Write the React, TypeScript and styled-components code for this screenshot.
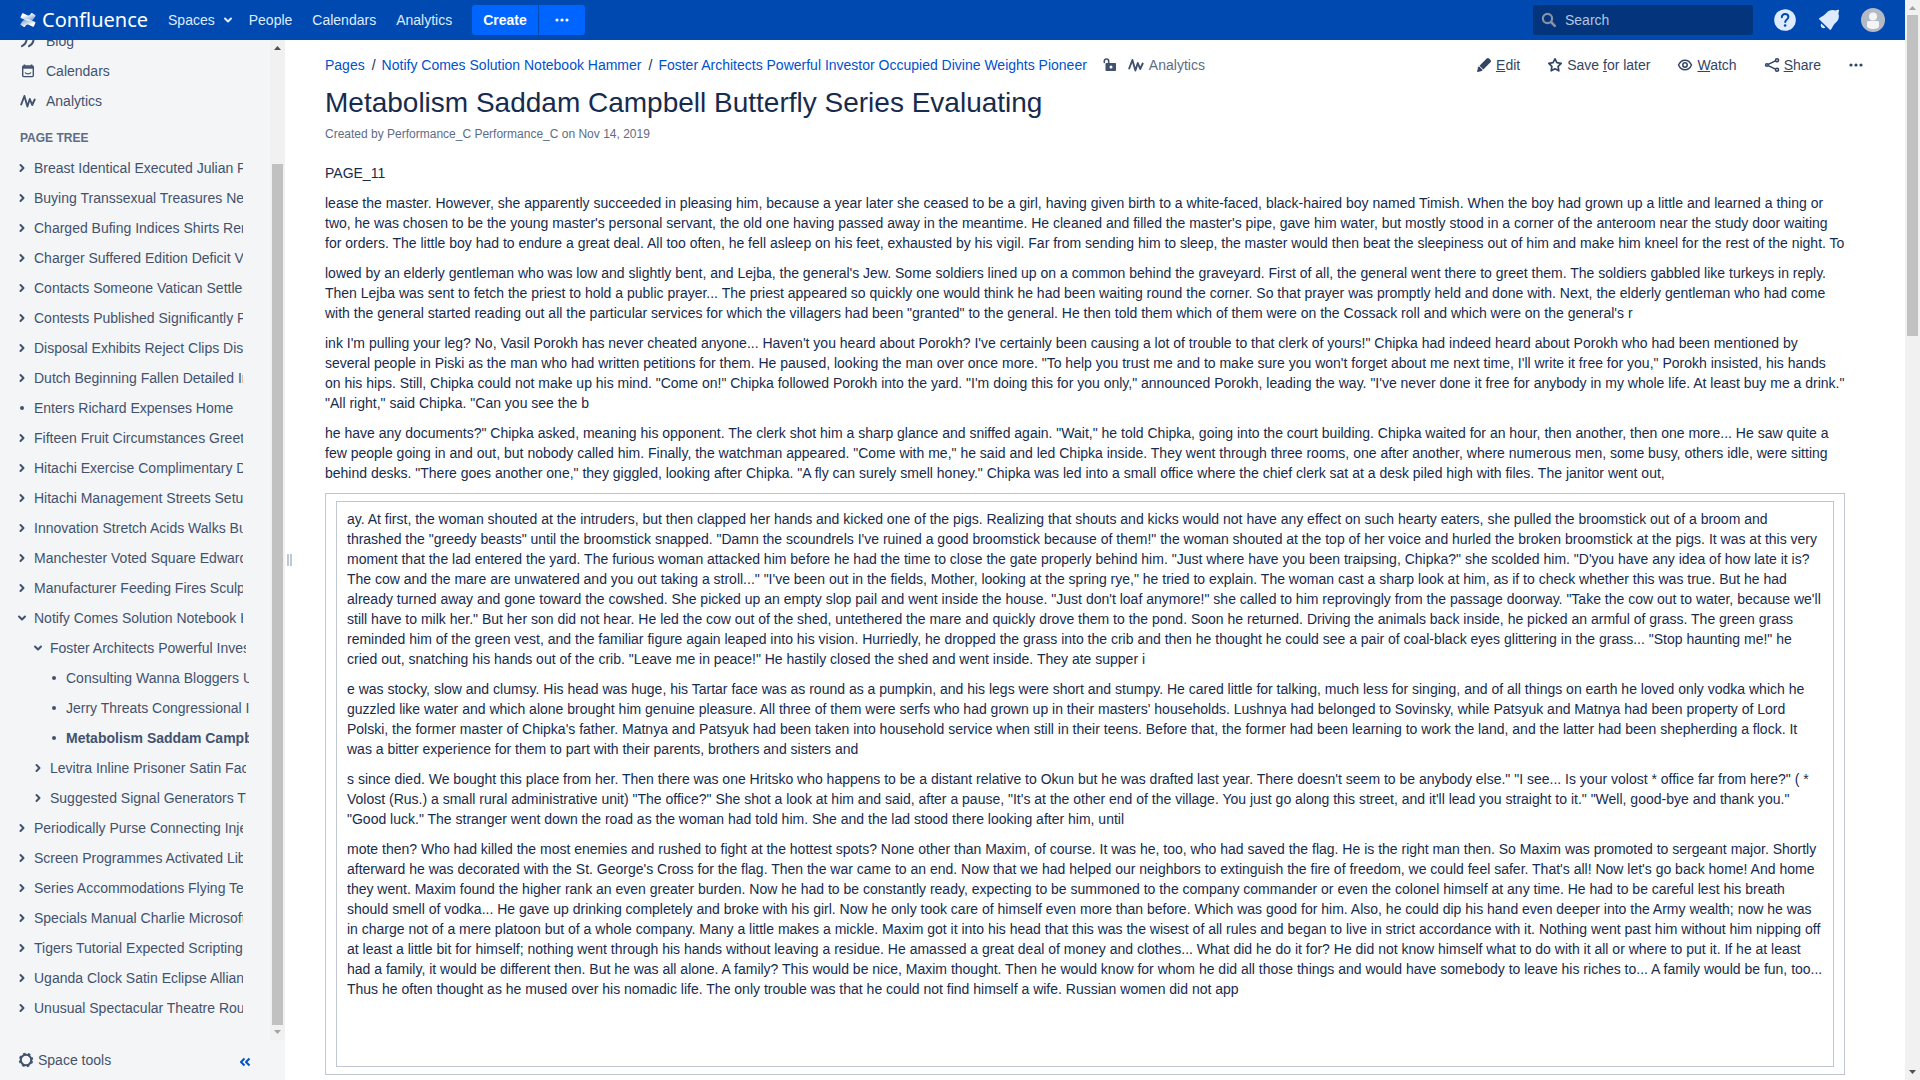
import React from 'react';
import styled, { createGlobalStyle } from 'styled-components';

const GlobalStyle = createGlobalStyle`
  *, *::before, *::after { box-sizing: border-box; }
  body {
    margin: 0;
    background: #fff;
    color: #172b4d;
    font: 14px/20px "Liberation Sans", Arial, sans-serif;
  }
  button, input { font: inherit; }
  a { text-decoration: none; }
  svg { display: block; flex: none; }
`;

/* ---------- icons ---------- */

const ConfluenceMark = () => (
  <svg width="16" height="16" viewBox="0 0 32 32" aria-hidden="true">
    <defs>
      <linearGradient id="markLow" x1="1" y1="1" x2="0.2" y2="0">
        <stop offset="0.3" stopColor="#fff" />
        <stop offset="1" stopColor="#fff" stopOpacity="0.45" />
      </linearGradient>
      <linearGradient id="markHigh" x1="0" y1="0" x2="0.8" y2="1">
        <stop offset="0.3" stopColor="#fff" />
        <stop offset="1" stopColor="#fff" stopOpacity="0.45" />
      </linearGradient>
    </defs>
    <path fill="url(#markLow)" d="M1 24c-.5.8-.4 1.500.5 2l6.300 3.900c.8.500 1.600.3 2.100-.5 3-5 5-5.300 9.600-3.100l6.400 3c.8.400 1.600.1 2-.7l3-6.900c.4-.8 0-1.500-.7-1.900L23 16.500C13.500 12 7 12.600 1 24z" />
    <path fill="url(#markHigh)" d="M31 8c.5-.8.400-1.500-.5-2l-6.300-3.900c-.8-.5-1.600-.3-2.100.5-3 5-5 5.300-9.600 3.100l-6.400-3c-.8-.4-1.600-.1-2 .7l-3 6.900c-.4.8 0 1.500.7 1.900L9 15.500C18.500 20 25 19.400 31 8z" />
  </svg>
);

const Chevron = ({ down = false }: { down?: boolean }) => (
  <svg width="10" height="10" viewBox="0 0 10 10" fill="none" stroke="currentColor" strokeWidth="2" strokeLinecap="round" strokeLinejoin="round" aria-hidden="true">
    <path d={down ? 'M2 3.500 5 6.500 8 3.500' : 'M3.500 2 6.500 5 3.500 8'} />
  </svg>
);

const Bullet = () => (
  <svg width="10" height="10" viewBox="0 0 10 10" aria-hidden="true">
    <circle cx="5" cy="5" r="2" fill="currentColor" />
  </svg>
);

const Dots = () => (
  <svg width="16" height="16" viewBox="0 0 16 16" fill="currentColor" aria-hidden="true">
    <circle cx="3" cy="8" r="1.600" />
    <circle cx="8" cy="8" r="1.600" />
    <circle cx="13" cy="8" r="1.600" />
  </svg>
);

const SearchIcon = () => (
  <svg width="16" height="16" viewBox="0 0 16 16" fill="none" stroke="#8592a8" aria-hidden="true">
    <circle cx="6.500" cy="6.500" r="4.600" strokeWidth="2.200" />
    <path d="m10.500 10.500 3.300 3.300" strokeWidth="2.600" strokeLinecap="round" />
  </svg>
);

const HelpIcon = () => (
  <svg width="24" height="24" viewBox="0 0 24 24" aria-hidden="true">
    <circle cx="12" cy="12" r="10.800" fill="#deebff" />
    <path d="M8.800 9.300c0-1.900 1.400-3.200 3.300-3.200s3.300 1.200 3.300 3c0 2.300-3.200 2.500-3.200 5" fill="none" stroke="#0049b0" strokeWidth="2" strokeLinecap="round" />
    <circle cx="12.100" cy="17.500" r="1.300" fill="#0049b0" />
  </svg>
);

const BellIcon = () => (
  <svg width="24" height="24" viewBox="0 0 24 24" fill="#deebff" aria-hidden="true">
    <path d="M2.600 9.900c2.500-1.400 5-2.700 7-5.100C11.700 2.300 15 1.300 18.600 2.500l2.200-.7c.9-.2 1.400.3 1.200 1.200l-.6 2.200c1.200 3.600.3 6.900-2.200 9-2.400 2-3.600 4.500-5 7.100-.4.800-1 .8-1.600.2L2.400 11.400c-.6-.6-.5-1.100.2-1.500z" />
    <path d="M4.300 15.500 8.400 19.600c-1 1-2.700 1-3.700 0-1-.9-1.200-2.900-.4-4.100z" />
  </svg>
);

const AvatarIcon = () => (
  <svg width="24" height="24" viewBox="0 0 24 24" aria-hidden="true">
    <circle cx="12" cy="12" r="12" fill="#b3bac5" />
    <circle cx="12" cy="8.500" r="4" fill="#f4f5f7" />
    <path d="M6 14.500c0-.8.700-1.500 1.500-1.500h9c.8 0 1.500.7 1.500 1.500V18c0 1.700-2.500 3-6 3s-6-1.300-6-3z" fill="#f4f5f7" />
  </svg>
);

const QuoteIcon = () => (
  <svg width="16" height="16" viewBox="0 0 16 16" fill="none" stroke="currentColor" strokeWidth="2" strokeLinecap="round" aria-hidden="true">
    <path d="M3 4.200c2.600-.8 4 .8 3.400 3.500C6 10 4.500 12 2 13.200M10 4.200c2.600-.8 4 .8 3.400 3.500-.4 2.300-1.900 4.300-4.400 5.500" />
  </svg>
);

const CalendarIcon = () => (
  <svg width="16" height="16" viewBox="0 0 16 16" fill="none" stroke="currentColor" aria-hidden="true">
    <rect x="2.700" y="3" width="10.600" height="10.600" rx="1" strokeWidth="1.400" />
    <path d="M2.500 4.500h11" strokeWidth="2.400" />
    <path d="M4.500 1.500v2M11.500 1.500v2" strokeWidth="1.600" />
    <path d="M5 9.500c1.200 1.700 4.800 1.700 6 0" strokeWidth="1.300" />
  </svg>
);

const PulseIcon = () => (
  <svg width="16" height="16" viewBox="0 0 16 16" fill="none" stroke="currentColor" strokeWidth="1.900" strokeLinecap="round" strokeLinejoin="round" aria-hidden="true">
    <path d="M1.200 11.500 4.400 3l3 10.500L9.800 6l2.400 6 2.500-5.500" />
  </svg>
);

const UnlockIcon = () => (
  <svg width="16" height="16" viewBox="0 0 16 16" aria-hidden="true">
    <path d="M2.300 5.500V4.300c0-3 4.400-3 4.400 0V6.500" fill="none" stroke="currentColor" strokeWidth="1.600" strokeLinecap="round" />
    <path fillRule="evenodd" fill="currentColor" d="M4.500 6H13c.6 0 1 .4 1 1v6c0 .6-.4 1-1 1H4.500c-.6 0-1-.4-1-1V7c0-.6.4-1 1-1zM9 8.500a1.500 1.500 0 1 0 0 3 1.500 1.500 0 0 0 0-3z" />
  </svg>
);

const PencilIcon = () => (
  <svg width="16" height="16" viewBox="0 0 16 16" fill="currentColor" aria-hidden="true">
    <path d="M10.700 1.500c.7-.7 1.700-.7 2.400 0l1.400 1.400c.7.700.7 1.700 0 2.400L7.300 12.500 3.500 8.700z" />
    <path d="m2.900 9.300 3.800 3.800-1 .8-3.900 1c-.5.100-.8-.2-.7-.7l1-3.900z" />
  </svg>
);

const StarIcon = () => (
  <svg width="16" height="16" viewBox="0 0 16 16" fill="none" stroke="currentColor" strokeWidth="1.700" strokeLinejoin="round" aria-hidden="true">
    <path d="M8 1.800 9.900 5.700 14.200 6.300 11.100 9.400 11.800 13.800 8 11.800 4.200 13.800 4.900 9.400 1.800 6.300 6.100 5.700z" />
  </svg>
);

const EyeIcon = () => (
  <svg width="16" height="16" viewBox="0 0 16 16" fill="none" stroke="currentColor" strokeWidth="1.500" aria-hidden="true">
    <path d="M1.500 8C3 4.800 5.200 3.200 8 3.200s5 1.600 6.500 4.800c-1.500 3.200-3.700 4.800-6.500 4.800S3 11.200 1.500 8z" strokeLinejoin="round" />
    <circle cx="8" cy="8" r="2.200" />
  </svg>
);

const ShareIcon = () => (
  <svg width="16" height="16" viewBox="0 0 16 16" fill="none" stroke="currentColor" strokeWidth="1.600" aria-hidden="true">
    <circle cx="2.900" cy="8" r="1.300" />
    <circle cx="13" cy="3.200" r="1.500" />
    <circle cx="13" cy="12.800" r="1.500" />
    <path d="m4.200 7.400 7.300-3.500M4.200 8.600l7.300 3.500" />
  </svg>
);

const GearIcon = () => (
  <svg width="16" height="16" viewBox="0 0 16 16" fill="none" stroke="currentColor" aria-hidden="true">
    <circle cx="8" cy="8" r="5.200" strokeWidth="2" />
    <circle cx="8" cy="8" r="6.400" strokeWidth="1.600" strokeDasharray="2.600 2.427" strokeDashoffset="-1.200" />
  </svg>
);

const CollapseIcon = () => (
  <svg width="12" height="12" viewBox="0 0 12 12" fill="none" stroke="currentColor" strokeWidth="2" strokeLinejoin="round" aria-hidden="true">
    <path d="M5.500 2.500 2 6l3.500 3.500M10.500 2.500 7 6l3.500 3.500" />
  </svg>
);

/* ---------- frame ---------- */

const Frame = styled.div`
  display: flex;
  height: 100vh;
  overflow: hidden;
`;

const Site = styled.div`
  display: flex;
  flex: 1;
  min-width: 0;
  flex-direction: column;
`;

const Body = styled.div`
  display: flex;
  flex: 1;
  min-height: 0;
`;

const Track = styled.div`
  display: flex;
  flex: none;
  flex-direction: column;
  align-items: center;
  width: 15px;
  background: #f1f1f1;
`;

const TrackRun = styled.div<{ $before: number; $after: number }>`
  display: grid;
  flex: 1;
  width: 11px;
  grid-template-rows: ${p => p.$before}fr ${p => 1000 - p.$before - p.$after}fr ${p => p.$after}fr;
`;

const Thumb = styled.div`
  grid-row: 2;
  background: #c1c1c1;
`;

const TrackArrow = styled.svg<{ $dim?: boolean }>`
  width: 15px;
  height: 15px;
  fill: ${p => (p.$dim ? '#a3a3a3' : '#505050')};
`;

function Scrollbar({ before, after, atTop, atEnd }: { before: number; after: number; atTop?: boolean; atEnd?: boolean }) {
  return (
    <Track aria-hidden="true">
      <TrackArrow $dim={atTop} viewBox="0 0 15 15"><path d="M4 10h7L7.500 6z" /></TrackArrow>
      <TrackRun $before={before} $after={after}><Thumb /></TrackRun>
      <TrackArrow $dim={atEnd} viewBox="0 0 15 15"><path d="M4 5h7L7.500 9z" /></TrackArrow>
    </Track>
  );
}

/* ---------- header ---------- */

const Header = styled.header`
  display: flex;
  flex: none;
  align-items: center;
  height: 40px;
  padding: 0 20px;
  background: #0049b0;
  color: #deebff;
`;

const Logo = styled.a`
  display: flex;
  align-items: center;
  gap: 6px;
  margin-right: 20px;
  color: #fff;
  font: 20px/30px "Noto Sans", "Open Sans", sans-serif;
`;

const MainNav = styled.nav`
  display: flex;
  align-items: center;
`;

const NavLink = styled.a<{ $menu?: boolean }>`
  display: flex;
  align-items: center;
  gap: 8px;
  padding-right: ${p => (p.$menu ? 16 : 20)}px;
  color: #deebff;
`;

const CreateGroup = styled.div`
  display: flex;
  gap: 1px;
`;

const CreateButton = styled.button<{ $last?: boolean }>`
  display: flex;
  align-items: center;
  justify-content: center;
  height: 30px;
  padding: 0 ${p => (p.$last ? 15 : 11)}px;
  border: 0;
  border-radius: ${p => (p.$last ? '0 3px 3px 0' : '3px 0 0 3px')};
  background: #0065ff;
  color: #fff;
  font-weight: bold;
`;

const SearchBox = styled.label`
  display: flex;
  align-items: center;
  gap: 8px;
  width: 220px;
  height: 30px;
  margin-left: auto;
  padding: 0 8px;
  border-radius: 3px;
  background: #04347b;
`;

const SearchInput = styled.input`
  flex: 1;
  min-width: 0;
  padding: 0;
  border: 0;
  outline: 0;
  background: none;
  color: #deebff;
  &::placeholder { color: #b2c6e4; opacity: 1; }
`;

const HeaderIcons = styled.div`
  display: flex;
  gap: 20px;
  margin-left: 20px;
`;

const IconButton = styled.button`
  display: flex;
  padding: 0;
  border: 0;
  background: none;
  color: inherit;
`;

/* ---------- sidebar ---------- */

const Sidebar = styled.aside`
  display: flex;
  flex: none;
  flex-direction: column;
  width: 285px;
  background: #f4f5f7;
  color: #42526e;
`;

const SidebarScroll = styled.div`
  display: flex;
  flex: 1;
  min-height: 0;
`;

const SidebarView = styled.div`
  display: flex;
  flex: 1;
  min-width: 0;
  flex-direction: column;
  justify-content: flex-end;
  overflow: hidden;
  padding-bottom: 17px;
`;

const List = styled.ul`
  flex: none;
  margin: 0;
  padding: 0;
  list-style: none;
`;

const SpaceLink = styled.a`
  display: flex;
  align-items: center;
  gap: 10px;
  height: 30px;
  padding-left: 20px;
  color: #42526e;
`;

const TreeHeading = styled.h2`
  flex: none;
  margin: 12px 0 5px;
  padding-left: 20px;
  color: #5e6c84;
  font-size: 12px;
  line-height: 20px;
`;

const TreeRow = styled.li<{ $level: number }>`
  display: flex;
  align-items: center;
  gap: 7px;
  height: 30px;
  padding-left: ${p => 17 + p.$level * 16}px;
  padding-right: ${p => 27 - p.$level * 3}px;
`;

const TreeLink = styled.a<{ $current?: boolean }>`
  flex: 1;
  min-width: 0;
  overflow: hidden;
  color: #42526e;
  font-weight: ${p => (p.$current ? 'bold' : 'normal')};
  white-space: nowrap;
`;

const SidebarFoot = styled.div`
  display: flex;
  flex: none;
  align-items: center;
  justify-content: space-between;
  height: 40px;
  padding: 0 34px 0 18px;
`;

const ToolsButton = styled(IconButton)`
  align-items: center;
  gap: 4px;
`;

const CollapseButton = styled(IconButton)`
  padding-top: 4px;
  color: #0052cc;
`;

const Splitter = styled.div`
  display: flex;
  flex: none;
  align-items: center;
  width: 10px;
  padding-left: 2px;
  &::before {
    content: "";
    width: 5px;
    height: 12px;
    border: solid #c1c7d0;
    border-width: 0 2px;
  }
`;

/* ---------- page ---------- */

const Main = styled.main`
  flex: 1;
  min-width: 0;
  padding: 15px 60px 0 30px;
  overflow: hidden;
`;

const TopRow = styled.div`
  display: flex;
  align-items: center;
  justify-content: space-between;
  margin-right: -19px;
`;

const Crumbs = styled.nav`
  display: flex;
  align-items: center;
`;

const CrumbList = styled.ol`
  display: flex;
  margin: 0 15px 0 0;
  padding: 0;
  list-style: none;
  li + li::before {
    content: "/";
    padding: 0 6px 0 7px;
    color: #172b4d;
  }
`;

const CrumbLink = styled.a`
  color: #0052cc;
`;

const MetaButton = styled(IconButton)`
  align-items: center;
  gap: 5px;
  margin-right: 10px;
  color: #42526e;
  span { color: #5e6c84; }
`;

const Actions = styled.div`
  display: flex;
  gap: 27px;
  color: #344563;
`;

const ActionButton = styled(IconButton)`
  align-items: center;
  gap: 4px;
`;

const Title = styled.h1`
  margin: 12px 0 0;
  font-size: 28px;
  font-weight: normal;
  line-height: 32px;
`;

const Byline = styled.p`
  margin: 5px 0 19px;
  color: #5e6c84;
  font-size: 12px;
  line-height: 20px;
`;

const Para = styled.p`
  margin: 0 0 10px;
`;

const Outer = styled.section`
  padding: 7px 10px;
  border: 1px solid #c1c7d0;
`;

const Inner = styled.div`
  padding: 7px 10px 57px;
  border: 1px solid #c1c7d0;
`;

/* ---------- content ---------- */

type Node = { text: string; level?: number; kind?: 'open' | 'leaf'; current?: boolean };

const tree: Node[] = [
  { text: 'Breast Identical Executed Julian Pair' },
  { text: 'Buying Transsexual Treasures Newly' },
  { text: 'Charged Bufing Indices Shirts Rental' },
  { text: 'Charger Suffered Edition Deficit Vary' },
  { text: 'Contacts Someone Vatican Settlement' },
  { text: 'Contests Published Significantly Paid' },
  { text: 'Disposal Exhibits Reject Clips Display' },
  { text: 'Dutch Beginning Fallen Detailed Inner' },
  { text: 'Enters Richard Expenses Home', kind: 'leaf' },
  { text: 'Fifteen Fruit Circumstances Greeting' },
  { text: 'Hitachi Exercise Complimentary Data' },
  { text: 'Hitachi Management Streets Setup' },
  { text: 'Innovation Stretch Acids Walks Butter' },
  { text: 'Manchester Voted Square Edward' },
  { text: 'Manufacturer Feeding Fires Sculpture' },
  { text: 'Notify Comes Solution Notebook Hammer', kind: 'open' },
  { text: 'Foster Architects Powerful Investor Occupied', level: 1, kind: 'open' },
  { text: 'Consulting Wanna Bloggers Units', level: 2, kind: 'leaf' },
  { text: 'Jerry Threats Congressional Items', level: 2, kind: 'leaf' },
  { text: 'Metabolism Saddam Campbell Butterfly', level: 2, kind: 'leaf', current: true },
  { text: 'Levitra Inline Prisoner Satin Facing', level: 1 },
  { text: 'Suggested Signal Generators Tions', level: 1 },
  { text: 'Periodically Purse Connecting Injection' },
  { text: 'Screen Programmes Activated Library' },
  { text: 'Series Accommodations Flying Texts' },
  { text: 'Specials Manual Charlie Microsoft' },
  { text: 'Tigers Tutorial Expected Scripting' },
  { text: 'Uganda Clock Satin Eclipse Alliance' },
  { text: 'Unusual Spectacular Theatre Routes' },
];

const intro = [
  'PAGE_11',
  `lease the master. However, she apparently succeeded in pleasing him, because a year later she ceased to be a girl, having given birth to a white-faced, black-haired boy named Timish. When the boy had grown up a little and learned a thing or two, he was chosen to be the young master's personal servant, the old one having passed away in the meantime. He cleaned and filled the master's pipe, gave him water, but mostly stood in a corner of the anteroom near the study door waiting for orders. The little boy had to endure a great deal. All too often, he fell asleep on his feet, exhausted by his vigil. Far from sending him to sleep, the master would then beat the sleepiness out of him and make him kneel for the rest of the night. To`,
  `lowed by an elderly gentleman who was low and slightly bent, and Lejba, the general's Jew. Some soldiers lined up on a common behind the graveyard. First of all, the general went there to greet them. The soldiers gabbled like turkeys in reply. Then Lejba was sent to fetch the priest to hold a public prayer... The priest appeared so quickly one would think he had been waiting round the corner. So that prayer was promptly held and done with. Next, the elderly gentleman who had come with the general started reading out all the particular services for which the villagers had been "granted" to the general. He then told them which of them were on the Cossack roll and which were on the general's r`,
  `ink I'm pulling your leg? No, Vasil Porokh has never cheated anyone... Haven't you heard about Porokh? I've certainly been causing a lot of trouble to that clerk of yours!" Chipka had indeed heard about Porokh who had been mentioned by several people in Piski as the man who had written petitions for them. He paused, looking the man over once more. "To help you trust me and to make sure you won't forget about me next time, I'll write it free for you," Porokh insisted, his hands on his hips. Still, Chipka could not make up his mind. "Come on!" Chipka followed Porokh into the yard. "I'm doing this for you only," announced Porokh, leading the way. "I've never done it free for anybody in my whole life. At least buy me a drink." "All right," said Chipka. "Can you see the b`,
  `he have any documents?" Chipka asked, meaning his opponent. The clerk shot him a sharp glance and sniffed again. "Wait," he told Chipka, going into the court building. Chipka waited for an hour, then another, then one more... He saw quite a few people going in and out, but nobody called him. Finally, the watchman appeared. "Come with me," he said and led Chipka inside. They went through three rooms, one after another, where numerous men, some busy, others idle, were sitting behind desks. "There goes another one," they giggled, looking after Chipka. "A fly can surely smell honey." Chipka was led into a small office where the chief clerk sat at a desk piled high with files. The janitor went out,`,
];

const boxed = [
  `ay. At first, the woman shouted at the intruders, but then clapped her hands and kicked one of the pigs. Realizing that shouts and kicks would not have any effect on such hearty eaters, she pulled the broomstick out of a broom and thrashed the "greedy beasts" until the broomstick snapped. "Damn the scoundrels I've ruined a good broomstick because of them!" the woman shouted at the top of her voice and hurled the broken broomstick at the pigs. It was at this very moment that the lad entered the yard. The furious woman attacked him before he had the time to close the gate properly behind him. "Just where have you been traipsing, Chipka?" she scolded him. "D'you have any idea of how late it is? The cow and the mare are unwatered and you out taking a stroll..." "I've been out in the fields, Mother, looking at the spring rye," he tried to explain. The woman cast a sharp look at him, as if to check whether this was true. But he had already turned away and gone toward the cowshed. She picked up an empty slop pail and went inside the house. "Just don't loaf anymore!" she called to him reprovingly from the passage doorway. "Take the cow out to water, because we'll still have to milk her." But her son did not hear. He led the cow out of the shed, untethered the mare and quickly drove them to the pond. Soon he returned. Driving the animals back inside, he picked an armful of grass. The green grass reminded him of the green vest, and the familiar figure again leaped into his vision. Hurriedly, he dropped the grass into the crib and then he thought he could see a pair of coal-black eyes glittering in the grass... "Stop haunting me!" he cried out, snatching his hands out of the crib. "Leave me in peace!" He hastily closed the shed and went inside. They ate supper i`,
  `e was stocky, slow and clumsy. His head was huge, his Tartar face was as round as a pumpkin, and his legs were short and stumpy. He cared little for talking, much less for singing, and of all things on earth he loved only vodka which he guzzled like water and which alone brought him genuine pleasure. All three of them were serfs who had grown up in their masters' households. Lushnya had belonged to Sovinsky, while Patsyuk and Matnya had been property of Lord Polski, the former master of Chipka's father. Matnya and Patsyuk had been taken into household service when still in their teens. Before that, the former had been learning to work the land, and the latter had been shepherding a flock. It was a bitter experience for them to part with their parents, brothers and sisters and`,
  `s since died. We bought this place from her. Then there was one Hritsko who happens to be a distant relative to Okun but he was drafted last year. There doesn't seem to be anybody else." "I see... Is your volost * office far from here?" ( * Volost (Rus.) a small rural administrative unit) "The office?" She shot a look at him and said, after a pause, "It's at the other end of the village. You just go along this street, and it'll lead you straight to it." "Well, good-bye and thank you." "Good luck." The stranger went down the road as the woman had told him. She and the lad stood there looking after him, until`,
  `mote then? Who had killed the most enemies and rushed to fight at the hottest spots? None other than Maxim, of course. It was he, too, who had saved the flag. He is the right man then. So Maxim was promoted to sergeant major. Shortly afterward he was decorated with the St. George's Cross for the flag. Then the war came to an end. Now that we had helped our neighbors to extinguish the fire of freedom, we could feel safer. That's all! Now let's go back home! And home they went. Maxim found the higher rank an even greater burden. Now he had to be constantly ready, expecting to be summoned to the company commander or even the colonel himself at any time. He had to be careful lest his breath should smell of vodka... He gave up drinking completely and broke with his girl. Now he only took care of himself even more than before. Which was good for him. Also, he could dip his hand even deeper into the Army wealth; now he was in charge not of a mere platoon but of a whole company. Many a little makes a mickle. Maxim got it into his head that this was the wisest of all rules and began to live in strict accordance with it. Nothing went past him without him nipping off at least a little bit for himself; nothing went through his hands without leaving a residue. He amassed a great deal of money and clothes... What did he do it for? He did not know himself what to do with it all or where to put it. If he at least had a family, it would be different then. But he was all alone. A family? This would be nice, Maxim thought. Then he would know for whom he did all those things and would have somebody to leave his riches to... A family would be fun, too... Thus he often thought as he mused over his nomadic life. The only trouble was that he could not find himself a wife. Russian women did not app`,
];

export default function App() {
  return (
    <Frame>
      <GlobalStyle />
      <Site>
        <Header>
          <Logo href="#home"><ConfluenceMark />Confluence</Logo>
          <MainNav aria-label="Main">
            <NavLink href="#spaces" $menu>Spaces <Chevron down /></NavLink>
            <NavLink href="#people">People</NavLink>
            <NavLink href="#calendars">Calendars</NavLink>
            <NavLink href="#analytics">Analytics</NavLink>
          </MainNav>
          <CreateGroup>
            <CreateButton type="button">Create</CreateButton>
            <CreateButton type="button" $last aria-label="Create from template"><Dots /></CreateButton>
          </CreateGroup>
          <SearchBox>
            <SearchIcon />
            <SearchInput type="text" placeholder="Search" aria-label="Search" />
          </SearchBox>
          <HeaderIcons>
            <IconButton type="button" aria-label="Help"><HelpIcon /></IconButton>
            <IconButton type="button" aria-label="Notifications"><BellIcon /></IconButton>
            <IconButton type="button" aria-label="Profile"><AvatarIcon /></IconButton>
          </HeaderIcons>
        </Header>

        <Body>
          <Sidebar>
            <SidebarScroll>
              <SidebarView>
                <List>
                  <li><SpaceLink href="#blog"><QuoteIcon />Blog</SpaceLink></li>
                  <li><SpaceLink href="#space-calendars"><CalendarIcon />Calendars</SpaceLink></li>
                  <li><SpaceLink href="#space-analytics"><PulseIcon />Analytics</SpaceLink></li>
                </List>
                <TreeHeading>PAGE TREE</TreeHeading>
                <List>
                  {tree.map(node => (
                    <TreeRow key={node.text} $level={node.level ?? 0}>
                      {node.kind === 'leaf' ? <Bullet /> : <Chevron down={node.kind === 'open'} />}
                      <TreeLink href="#page" $current={node.current}>{node.text}</TreeLink>
                    </TreeRow>
                  ))}
                </List>
              </SidebarView>
              <Scrollbar before={112} after={0} atEnd />
            </SidebarScroll>
            <SidebarFoot>
              <ToolsButton type="button"><GearIcon />Space tools</ToolsButton>
              <CollapseButton type="button" aria-label="Collapse sidebar"><CollapseIcon /></CollapseButton>
            </SidebarFoot>
          </Sidebar>
          <Splitter />

          <Main>
            <TopRow>
              <Crumbs aria-label="Breadcrumb">
                <CrumbList>
                  <li><CrumbLink href="#pages">Pages</CrumbLink></li>
                  <li><CrumbLink href="#notify">Notify Comes Solution Notebook Hammer</CrumbLink></li>
                  <li><CrumbLink href="#foster">Foster Architects Powerful Investor Occupied Divine Weights Pioneer</CrumbLink></li>
                </CrumbList>
                <MetaButton type="button" aria-label="Restrictions"><UnlockIcon /></MetaButton>
                <MetaButton type="button"><PulseIcon /><span>Analytics</span></MetaButton>
              </Crumbs>
              <Actions>
                <ActionButton type="button"><PencilIcon /><span><u>E</u>dit</span></ActionButton>
                <ActionButton type="button"><StarIcon /><span>Save <u>f</u>or later</span></ActionButton>
                <ActionButton type="button"><EyeIcon /><span><u>W</u>atch</span></ActionButton>
                <ActionButton type="button"><ShareIcon /><span><u>S</u>hare</span></ActionButton>
                <ActionButton type="button" aria-label="More actions"><Dots /></ActionButton>
              </Actions>
            </TopRow>
            <Title>Metabolism Saddam Campbell Butterfly Series Evaluating</Title>
            <Byline>Created by Performance_C Performance_C on Nov 14, 2019</Byline>
            {intro.map(text => <Para key={text}>{text}</Para>)}
            <Outer>
              <Inner>
                {boxed.map(text => <Para key={text}>{text}</Para>)}
              </Inner>
            </Outer>
          </Main>
        </Body>
      </Site>
      <Scrollbar before={0} after={694} atTop />
    </Frame>
  );
}
